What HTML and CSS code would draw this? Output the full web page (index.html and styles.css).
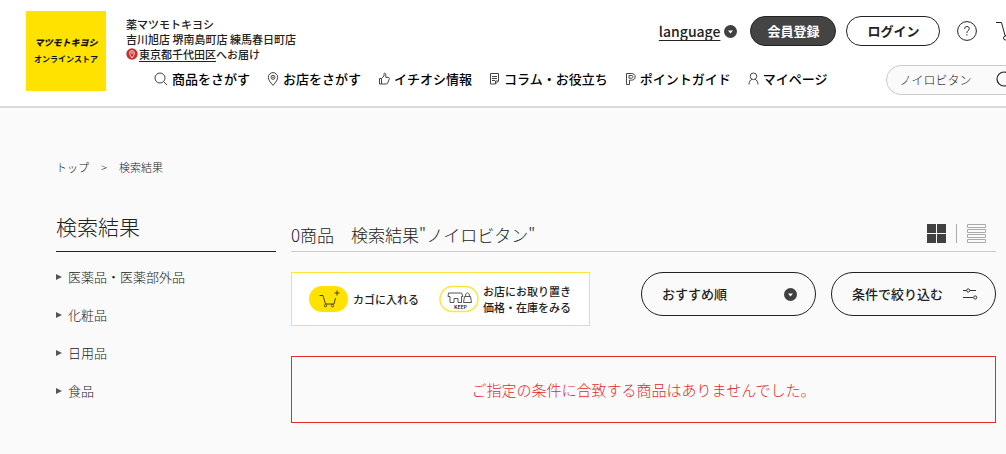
FILE: index.html
```html
<!DOCTYPE html>
<html lang="ja">
<head>
<meta charset="utf-8">
<meta name="viewport" content="width=device-width, initial-scale=1">
<title>検索結果 | マツモトキヨシ オンラインストア</title>
<link rel="stylesheet" href="styles.css">
</head>
<body>
<header class="header">
  <a class="logo" href="#">
    <span class="logo-brand">マツモトキヨシ</span>
    <span class="logo-sub">オンラインストア</span>
  </a>
  <div class="header-body">
    <div class="header-top">
      <div class="store">
        <p class="store-line">薬マツモトキヨシ</p>
        <p class="store-line">吉川旭店 堺南島町店 練馬春日町店</p>
        <p class="store-line store-delivery">
          <svg class="pin" viewBox="0 0 12 12" width="12" height="12" aria-hidden="true"><circle cx="6" cy="6" r="5.700" fill="#c9302c"/><path d="M6 10C4.600 8 3.700 6.600 3.700 5a2.300 2.300 0 0 1 4.600 0C8.300 6.600 7.400 8 6 10Z" fill="none" stroke="#fff" stroke-width=".9"/><circle cx="6" cy="5" r=".8" fill="#fff"/></svg>
          <a class="area" href="#">東京都千代田区</a>へお届け
        </p>
      </div>
      <div class="actions">
        <a class="language" href="#"><span class="language-label">language</span>
          <svg viewBox="0 0 13 13" width="13" height="13" aria-hidden="true"><circle cx="6.500" cy="6.500" r="6.500" fill="#404040"/><path d="M4 5.500h5L6.500 8.500Z" fill="#fff"/></svg>
        </a>
        <button class="pill pill-dark" type="button">会員登録</button>
        <button class="pill pill-light" type="button">ログイン</button>
        <a class="help" href="#" aria-label="ヘルプ">
          <svg viewBox="0 0 20 20" width="20" height="20" fill="none" stroke="#222"><circle cx="10" cy="10" r="9.400"/><path d="M7.700 7.800C7.700 6.300 8.600 5.500 10 5.500s2.300.9 2.300 2.200c0 1.700-2.400 1.900-2.400 4.200M9.900 13.200v1.300"/></svg>
        </a>
        <a class="cart" href="#" aria-label="カート">
          <svg viewBox="0 0 24 20" width="24" height="20" fill="none" stroke="#222"><path d="M0 1.500h5.500L9 14.500h11L23 5"/><circle cx="9.500" cy="17" r="2"/><circle cx="19" cy="17" r="2"/></svg>
        </a>
      </div>
    </div>
    <div class="header-nav">
      <nav class="nav">
        <a class="nav-item" href="#"><svg viewBox="0 0 14 14" width="14" height="14"><circle cx="6" cy="6" r="5"/><path d="M9.600 9.600 13 13"/></svg>商品をさがす</a>
        <a class="nav-item" href="#"><svg viewBox="0 0 12 14" width="12" height="14"><path d="M6 13.400C3 10 1.300 7.600 1.300 5.300a4.700 4.700 0 0 1 9.400 0C10.700 7.600 9 10 6 13.400Z"/><circle cx="6" cy="5.300" r="2"/><circle cx="6" cy="5.300" r=".4"/></svg>お店をさがす</a>
        <a class="nav-item" href="#"><svg viewBox="0 0 12 14" width="12" height="14"><path d="M1.500 6.500h2v5.500h-2ZM3.500 6.500 6 4V1.800c0-1 1.800-.8 1.800.6v3h2.600c1 0 1.100.9.800 1.700L9.700 11c-.3.700-.7 1-1.500 1H3.500"/></svg>イチオシ情報</a>
        <a class="nav-item" href="#"><svg viewBox="0 0 11 14" width="11" height="14"><path d="M1.500 1.500h8v7.500l-3 3h-5ZM9.500 9h-3v3M3 4.500h5M3 6.500h5M3 8.500h3"/></svg>コラム・お役立ち</a>
        <a class="nav-item" href="#"><svg viewBox="0 0 11 14" width="11" height="14"><path d="M1.500 12.500v-11h4.700c2.600 0 4 1.200 4 3.300s-1.500 3.400-4 3.400H4.500v4.300ZM4 3.500h2.300c1.100 0 1.700.4 1.700 1.300s-.6 1.400-1.700 1.400H4Z"/></svg>ポイントガイド</a>
        <a class="nav-item" href="#"><svg viewBox="0 0 11 14" width="11" height="14"><circle cx="5.500" cy="4.300" r="3.300"/><path d="M1 12.500C1 9.500 2.300 8 4 7.300M10 12.500c0-3-1.300-4.500-3-5.200"/></svg>マイページ</a>
      </nav>
      <form class="search" role="search">
        <input class="search-input" type="text" value="ノイロビタン" aria-label="商品検索">
        <button class="search-button" type="button" aria-label="検索"><svg viewBox="0 0 18 18" width="18" height="18" fill="none" stroke="#222" stroke-width="1.200"><circle cx="8" cy="8" r="7"/><path d="m13 13 4.500 4.500"/></svg></button>
      </form>
    </div>
  </div>
</header>

<div class="page">
  <nav class="breadcrumb" aria-label="パンくず"><a href="#">トップ</a><span>&gt;</span><span>検索結果</span></nav>
  <div class="columns">
    <aside class="sidebar">
      <h1 class="sidebar-title">検索結果</h1>
      <ul class="categories">
        <li><a class="category" href="#">医薬品・医薬部外品</a></li>
        <li><a class="category" href="#">化粧品</a></li>
        <li><a class="category" href="#">日用品</a></li>
        <li><a class="category" href="#">食品</a></li>
      </ul>
    </aside>
    <main class="results">
      <div class="results-head">
        <h2 class="results-title">0商品　検索結果"ノイロビタン"</h2>
        <div class="views">
          <button class="view" type="button" aria-label="グリッド表示"><svg viewBox="0 0 19 19" width="19" height="19"><path d="M0 0h9v9H0ZM10 0h9v9h-9ZM0 10h9v9H0ZM10 10h9v9h-9Z" fill="#404040"/></svg></button>
          <span class="view-divider"></span>
          <button class="view" type="button" aria-label="リスト表示"><svg viewBox="0 0 19 19" width="19" height="19" fill="none" stroke="#aaa"><path d="M.5.5h18v3H.5ZM.5 5.500h18v3H.5ZM.5 10.500h18v3H.5ZM.5 15.500h18v3H.5Z"/></svg></button>
        </div>
      </div>
      <div class="toolbar">
        <div class="legend">
          <span class="legend-item"><svg viewBox="0 0 40 28" width="40" height="28" fill="none" stroke="#333"><rect x="0" y="1" width="39" height="26" rx="13" fill="#ffe200" stroke="none"/><path d="M10.500 10.500h3.500l2.500 8.500h8.500l1.500-6M28 5.500v5M25.500 8h5" stroke-width=".9"/><circle cx="16.500" cy="20.700" r="1.200" stroke-width=".8"/><circle cx="23.500" cy="20.700" r="1.200" stroke-width=".8"/></svg>カゴに入れる</span>
          <span class="legend-item"><svg viewBox="0 0 40 28" width="40" height="28" fill="none" stroke="#444"><rect x="1" y="1.500" width="38" height="25" rx="12.500" fill="#fff" stroke="#ffe53b" stroke-width="1.500"/><path d="M9.500 8h13l1.500 3.500h-1.500v6h-3.500v-4h-4v4h-4v-6h-2ZM25.500 11.500h6l1 6h-8ZM26.500 11.500c0-5 4-5 4 0" stroke-width=".9"/><text class="keep" x="15" y="24">KEEP</text></svg><span>お店にお取り置き<br>価格・在庫をみる</span></span>
        </div>
        <div class="controls">
          <div class="sort">
            <select class="control sort-select" aria-label="並び順"><option>おすすめ順</option></select>
            <svg class="sort-icon" viewBox="0 0 13 13" width="13" height="13" aria-hidden="true"><circle cx="6.500" cy="6.500" r="6.500" fill="#404040"/><path d="M4 5.500h5L6.500 8.500Z" fill="#fff"/></svg>
          </div>
          <button class="control filter" type="button">条件で絞り込む<svg viewBox="0 0 15 12" width="15" height="12" fill="none" stroke="#333"><path d="M0 2.500h3.500M7 2.500h6M0 9.500h10"/><circle cx="5.200" cy="2.500" r="1.600"/><circle cx="12.200" cy="9.500" r="1.600"/></svg></button>
        </div>
      </div>
      <p class="message">ご指定の条件に合致する商品はありませんでした。</p>
    </main>
  </div>
</div>
</body>
</html>
```

FILE: styles.css
```css
* {
  box-sizing: border-box;
}

body {
  margin: 0;
  overflow-x: hidden;
  background: #fafafa;
  color: #222;
  font-family: "Noto Sans CJK JP", "Noto Sans", sans-serif;
  font-size: 13px;
  line-height: 20px;
}

a {
  color: inherit;
  text-decoration: none;
}

button,
input,
select {
  margin: 0;
  padding: 0;
  border: 0;
  background: none;
  color: inherit;
  font: inherit;
}

p,
h1,
h2,
ul {
  margin: 0;
  padding: 0;
}

svg {
  display: block;
  flex: none;
}

.header {
  display: flex;
  gap: 20px;
  padding: 11px 0 11px 26px;
  overflow: hidden;
  border-bottom: 2px solid #dadada;
  background: #fff;
}

.logo {
  display: flex;
  flex: none;
  flex-direction: column;
  align-items: center;
  justify-content: center;
  width: 80px;
  height: 80px;
  background: #ffe200;
  color: #111;
  white-space: nowrap;
}

.logo-brand {
  font-size: 9px;
  font-style: italic;
  font-weight: 900;
  line-height: 16px;
}

.logo-sub {
  font-size: 8px;
  font-weight: 700;
  line-height: 16px;
}

.header-body {
  flex: none;
}

.header-top {
  display: flex;
  align-items: center;
  height: 54px;
  padding-right: 36px;
}

.store {
  padding-top: 2px;
}

.store-line {
  font-size: 11px;
  font-weight: 500;
  line-height: 15px;
}

.store-delivery {
  display: flex;
  align-items: center;
}

.area {
  text-decoration: underline;
  text-underline-offset: 2px;
}

.pin {
  margin-right: 1px;
}

.actions {
  display: flex;
  align-self: flex-start;
  align-items: center;
  margin-left: auto;
  padding-top: 5px;
}

.language {
  display: flex;
  align-items: center;
  gap: 4px;
  margin-right: 13px;
  font-weight: 500;
}

.language-label {
  font-size: 14px;
  text-decoration: underline;
  text-underline-offset: 3px;
}

.pill {
  height: 30px;
  padding: 0 16px;
  border: 1px solid #222;
  border-radius: 15px;
  font-weight: 700;
}

.pill-dark {
  margin-right: 10px;
  background: #444;
  color: #fff;
}

.pill-light {
  margin-right: 17px;
  padding: 0 20px;
  background: #fff;
}

.help {
  margin-right: 19px;
}

.header-nav {
  display: flex;
  align-items: center;
  padding-left: 28px;
}

.nav {
  display: flex;
  gap: 17px;
  padding-bottom: 2px;
  color: #000;
  font-weight: 500;
}

.nav-item {
  display: flex;
  align-items: center;
  gap: 4px;
}

.nav-item svg {
  fill: none;
  stroke: #444;
}

.search {
  display: flex;
  align-items: center;
  width: 170px;
  height: 30px;
  margin-left: 59px;
  padding: 0 12px;
  border: 1px solid #ccc;
  border-radius: 15px;
  background: #fafafa;
}

.search-input {
  width: 97px;
  font-size: 12px;
  font-weight: 300;
}

.page {
  padding: 48px 10px 32px 56px;
}

.breadcrumb {
  display: flex;
  gap: 12px;
  margin-bottom: 36px;
  font-size: 11px;
  font-weight: 300;
  line-height: 22px;
}

.columns {
  display: flex;
  gap: 15px;
}

.sidebar {
  flex: none;
  width: 220px;
}

.sidebar-title {
  height: 38px;
  border-bottom: 1px solid #222;
  font-size: 21px;
  font-weight: 300;
  line-height: 24px;
}

.categories {
  display: flex;
  flex-direction: column;
  gap: 18px;
  padding-top: 15px;
  font-weight: 300;
  list-style: none;
}

.category {
  display: flex;
  align-items: center;
  gap: 6px;
}

.category::before {
  width: 0;
  border: 3px solid transparent;
  border-right-width: 0;
  border-left: 6px solid #555;
  content: "";
}

.results {
  flex: 1;
  min-width: 0;
}

.results-head {
  display: flex;
  align-items: center;
  justify-content: space-between;
  height: 38px;
  padding: 2px 10px 0 0;
  border-bottom: 1px solid #ccc;
}

.results-title {
  padding-top: 2px;
  font-size: 17px;
  font-weight: 300;
}

.views {
  display: flex;
  align-items: center;
  gap: 10px;
}

.view-divider {
  width: 1px;
  height: 19px;
  background: #aaa;
}

.toolbar {
  display: flex;
  align-items: flex-start;
  justify-content: space-between;
  padding: 20px 0 30px;
}

.legend {
  display: flex;
  align-items: center;
  gap: 20px;
  height: 54px;
  padding: 0 18px 0 17px;
  border: 1px solid #ffe53b;
  background: #fff;
  font-size: 11px;
  font-weight: 500;
  line-height: 16px;
  white-space: nowrap;
}

.legend-item {
  display: flex;
  align-items: center;
  gap: 4px;
}

.keep {
  fill: #333;
  stroke: none;
  font-size: 5px;
  font-weight: 700;
}

.controls {
  display: flex;
  gap: 15px;
}

.sort {
  position: relative;
}

.control {
  height: 44px;
  padding: 0 20px;
  border: 1px solid #222;
  border-radius: 22px;
  font-weight: 500;
}

.sort-select {
  width: 175px;
  appearance: none;
}

.sort-icon {
  position: absolute;
  top: 16px;
  right: 19px;
  pointer-events: none;
}

.filter {
  display: flex;
  align-items: center;
  justify-content: space-between;
  width: 165px;
  padding-right: 17px;
}

.message {
  padding: 22px 20px;
  border: 1px solid #e02b2b;
  color: #e02b2b;
  font-size: 15px;
  font-weight: 300;
  line-height: 21px;
  text-align: center;
}
```
